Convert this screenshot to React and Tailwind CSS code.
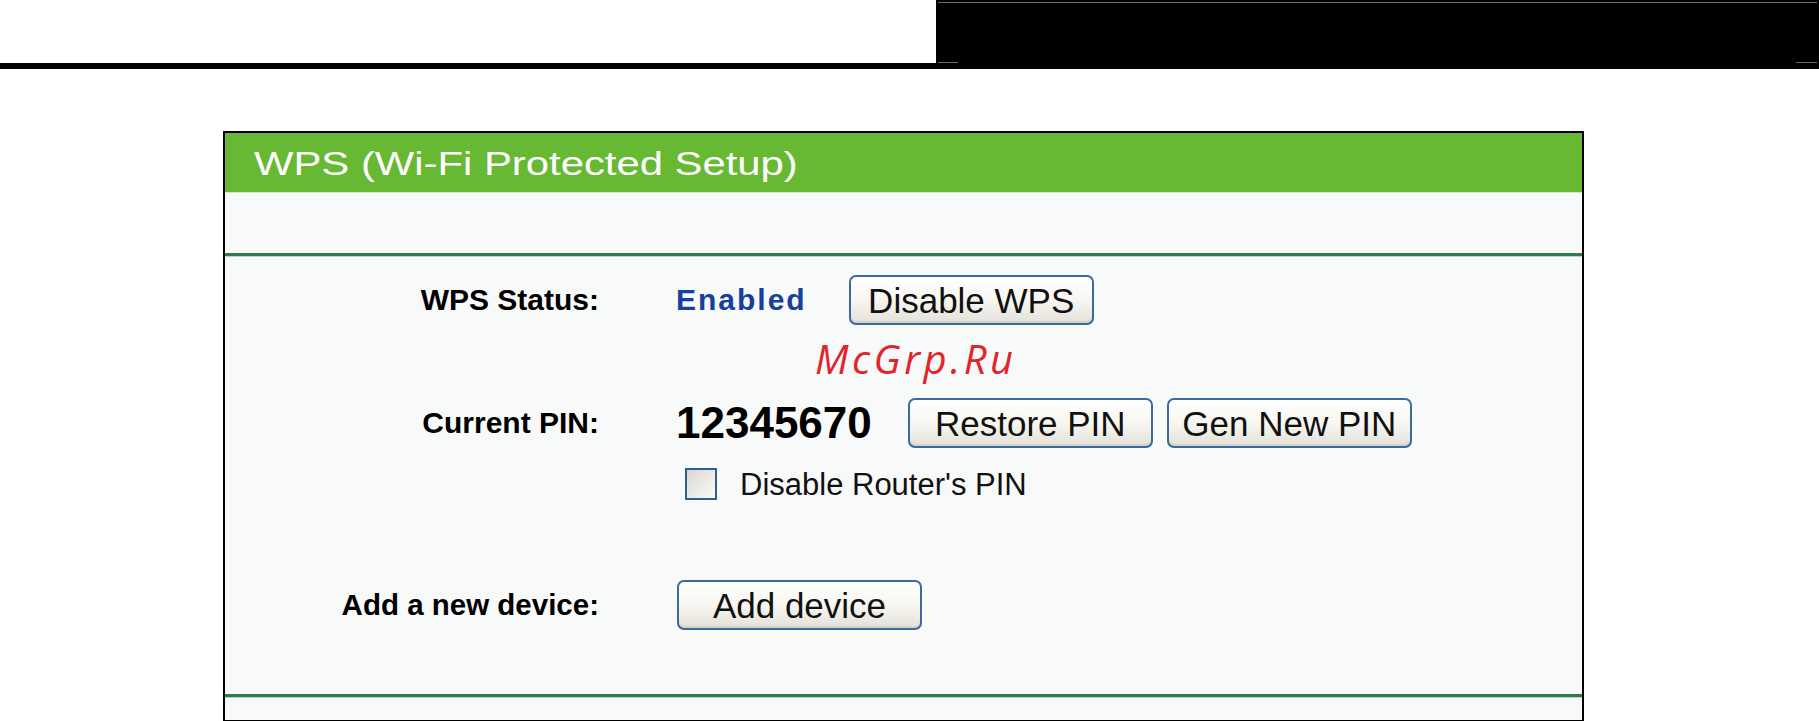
const font = "font-['Liberation_Sans',Arial,Helvetica,sans-serif]";

const XpButton = ({ children, className = "" }) => (
    <button
        type="button"
        className={`flex h-[50px] w-[245px] items-center justify-center rounded-[7px] border-2 border-[#3c6a9e] bg-gradient-to-b from-[#ffffff] via-[#f7f6f1] to-[#e3e1d8] text-[35px] leading-none text-[#111] shadow-[inset_0_-2px_0_#d6d3c6] ${className}`}
    >
        {children}
    </button>
);

const Label = ({ children }) => (
    <div className="flex items-center justify-end text-[30px] font-bold leading-none text-black">
        {children}
    </div>
);

const GreenRule = () => (
    <div>
        <div className="h-[3px] bg-[#2f7a52]"></div>
        <div className="h-px bg-[#b9d6c2]"></div>
    </div>
);

export default function App() {
    return (
        <div className={`h-[721px] w-[1819px] overflow-hidden bg-white ${font}`}>
            {/* page top bar */}
            <div className="flex h-[63px]">
                <div className="flex-1"></div>
                <div className="relative w-[883px] bg-black">
                    <div className="absolute left-[2px] right-[2px] top-[2px] h-px bg-[#6b6b6b]"></div>
                    <div className="absolute bottom-0 left-[2px] h-px w-[20px] bg-[#6b6b6b]"></div>
                    <div className="absolute bottom-0 right-[2px] h-px w-[21px] bg-[#6b6b6b]"></div>
                </div>
            </div>
            <div className="h-[6px] bg-black"></div>

            <div className="pl-[223px] pt-[62px]">
                <div className="relative w-[1361px] border-2 border-b-0 border-black bg-[#f8f9f9]">
                    <div className="flex h-[60px] items-center overflow-hidden border-b border-[#cfe8bf] bg-[#67b934] pl-[29px]">
                        <span className="inline-block origin-left scale-x-[1.23] text-[34px] leading-none text-white">
                            WPS (Wi-Fi Protected Setup)
                        </span>
                    </div>
                    <div className="h-[60px]"></div>
                    <GreenRule />

                    <div className="grid grid-cols-[374px_1fr] gap-x-[77px] pb-[64px] pt-[18px]">
                        <Label>WPS Status:</Label>
                        <div className="flex h-[50px] items-center">
                            <span className="text-[30px] font-bold leading-none tracking-[2px] text-[#173f9e]">
                                Enabled
                            </span>
                            <XpButton className="ml-[42px]">Disable WPS</XpButton>
                        </div>

                        <div className="mt-[73px]"></div>
                        <div className="mt-[73px]"></div>

                        <Label>Current PIN:</Label>
                        <div className="flex h-[50px] items-center">
                            <span className="text-[44px] font-bold leading-none text-black">12345670</span>
                            <XpButton className="ml-[36px]">Restore PIN</XpButton>
                            <XpButton className="ml-[14px]">Gen New PIN</XpButton>
                        </div>

                        <div></div>
                        <div className="mt-[20px] flex h-[32px] items-center">
                            <span className="ml-[9px] h-[32px] w-[32px] border-2 border-[#2f5f90] bg-gradient-to-br from-[#d9d8d0] to-[#fbfbf9]"></span>
                            <span className="ml-[23px] text-[31px] leading-none text-[#111]">Disable Router's PIN</span>
                        </div>

                        <div className="mt-[80px] flex h-[50px] items-center justify-end text-[29.5px] font-bold leading-none text-black">
                            Add a new device:
                        </div>
                        <div className="mt-[80px] flex h-[50px] items-center">
                            <XpButton className="ml-px">Add device</XpButton>
                        </div>
                    </div>

                    <GreenRule />
                    <div className="h-[22px]"></div>
                    <div className="h-[4px] bg-black"></div>

                    {/* watermark */}
                    <span className="absolute left-[590px] top-[206px] font-['Open_Sans',sans-serif] text-[40px] italic leading-none tracking-[3.5px] text-[#e0262a]">
                        McGrp.Ru
                    </span>
                </div>
            </div>
        </div>
    );
}
